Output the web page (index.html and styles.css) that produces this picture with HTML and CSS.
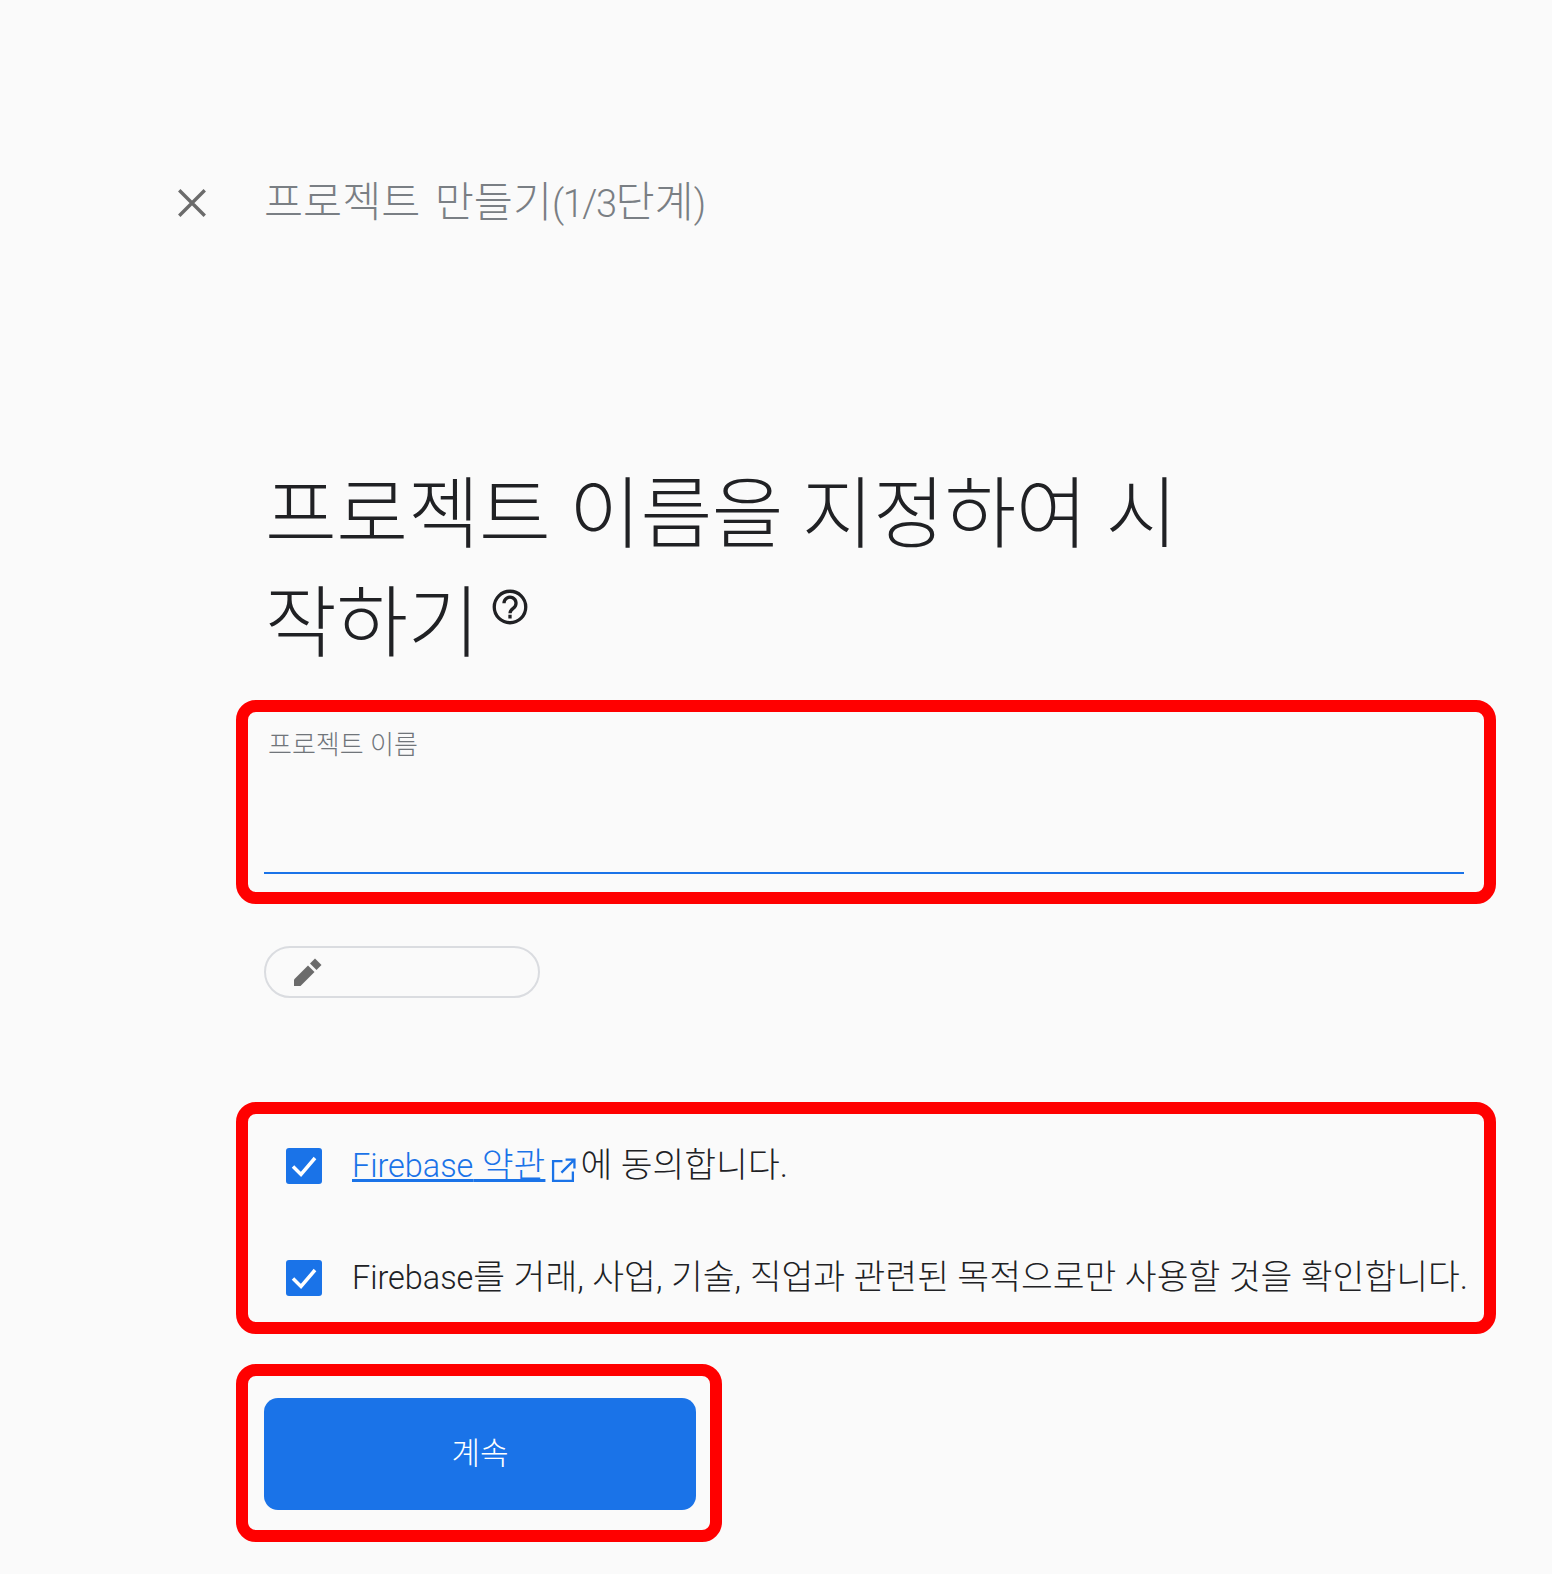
FILE: index.html
```html
<!DOCTYPE html>
<html lang="ko">
    <head>
        <meta charset="UTF-8">
        <title>프로젝트 만들기</title>
        <link rel="stylesheet" href="styles.css">
    </head>
    <body>
        <div class="topBar">
            <svg class="closeIcon" viewBox="0 0 24 24"><path d="M3 3L21 21M21 3L3 21"/></svg>
            <span class="stepTitle">프로젝트 만들기<span class="stepNum">(1/3</span>단계<span class="stepNum">)</span></span>
        </div>

        <h1 class="mainTitle">프로젝트 이름을 지정하여 시<br>작하기<svg class="helpIcon" viewBox="0 0 24 24"><circle cx="12" cy="12" r="10.5"/><path d="M8 9.5a4 4 0 1 1 6.3 3.2c-1.4 1-2.3 1.7-2.3 3.5M12 17.2v2.4"/></svg></h1>

        <div class="redBox nameBox">
            <div class="nameLabel">프로젝트 이름</div>
            <div class="nameLine"></div>
        </div>

        <div class="idChip">
            <svg class="pencilIcon" viewBox="0 0 28 28"><path d="M0 21.5L14 7.5l6.5 6.5L6.5 28H0z"/><path d="M16 5.5l5-5 6.5 6.5-5 5z"/></svg>
        </div>

        <div class="redBox termsBox">
            <div class="termRow">
                <span class="checkBox"><svg viewBox="0 0 36 36"><path d="M7 18.5l8 8L29 10"/></svg></span>
                <span class="termText"><a class="termLink"><span class="latin">Firebase</span> 약관</a><svg class="linkIcon" viewBox="0 0 24 24"><path d="M11 3H2v19h19v-9M14 1.5h8.5V10M22 2L10 14"/></svg>에 동의합니다.</span>
            </div>
            <div class="termRow">
                <span class="checkBox"><svg viewBox="0 0 36 36"><path d="M7 18.5l8 8L29 10"/></svg></span>
                <span class="termText"><span class="latin">Firebase</span>를 거래, 사업, 기술, 직업과 관련된 목적으로만 사용할 것을 확인합니다.</span>
            </div>
        </div>

        <div class="redBox buttonBox">
            <button class="btnContinue">계속</button>
        </div>
    </body>
</html>
```

FILE: styles.css
```css
body {
    margin: 0;
    background: #fafafa;
    font-family: Roboto, "Noto Sans CJK KR", sans-serif;
    color: #202124;
    padding: 171px 0 0 236px;
}

.topBar {
    display: flex;
    align-items: center;
    height: 54px;
    margin-left: -62px;
}

.closeIcon {
    width: 34px;
    height: 34px;
    fill: none;
    stroke: #6b6b6b;
    stroke-width: 2.4;
    margin: 10px 55px 0 1px;
}

.stepTitle {
    font-size: 42.5px;
    font-weight: 300;
    word-spacing: 4px;
    color: #7a7f84;
}

.stepNum {
    font-size: 38px;
    letter-spacing: -1.5px;
}

.mainTitle {
    margin: 236px 0 21px 29px;
    font-size: 78px;
    font-weight: 300;
    line-height: 109px;
    letter-spacing: -0.4px;
}

.helpIcon {
    width: 36px;
    height: 36px;
    fill: none;
    stroke: #202124;
    stroke-width: 2.2;
    margin-left: 13px;
    vertical-align: 26px;
}

.redBox {
    box-sizing: border-box;
    width: 1260px;
    border: 12px solid #ff0000;
    border-radius: 20px;
}

.nameBox {
    height: 204px;
    padding: 15px 20px 0 16px;
    display: flex;
    flex-direction: column;
}

.nameLabel {
    padding-left: 4px;
    font-size: 26px;
    font-weight: 300;
    color: #70757a;
    line-height: 36px;
}

.nameLine {
    margin-top: auto;
    margin-bottom: 18px;
    height: 2px;
    background: #1a73e8;
}

.idChip {
    box-sizing: border-box;
    width: 276px;
    height: 52px;
    margin: 42px 0 104px 28px;
    border: 2px solid #dadce0;
    border-radius: 26px;
    padding: 10px 0 0 28px;
}

.pencilIcon {
    width: 28px;
    height: 28px;
    fill: #6b6b6b;
    display: block;
}

.termsBox {
    height: 232px;
    padding: 30px 0 0 38px;
}

.termRow {
    display: flex;
    align-items: center;
    height: 40px;
    margin-bottom: 72px;
    white-space: nowrap;
}

.checkBox {
    width: 36px;
    height: 36px;
    flex: none;
    margin: 4px 30px 0 0;
    background: #1a73e8;
    border-radius: 3px;
}

.checkBox svg {
    display: block;
    fill: none;
    stroke: #ffffff;
    stroke-width: 3.5;
}

.termText {
    font-size: 34.6px;
    font-weight: 300;
    padding-bottom: 4px;
}

.latin {
    font-size: 32.4px;
}

.termLink {
    color: #1a73e8;
    text-decoration: underline;
}

.linkIcon {
    width: 25px;
    height: 25px;
    fill: none;
    stroke: #1a73e8;
    stroke-width: 2.2;
    margin: 0 4px 0 6px;
    vertical-align: -6px;
}

.buttonBox {
    width: 486px;
    height: 178px;
    margin-top: 30px;
    padding: 22px 0 0 16px;
}

.btnContinue {
    display: block;
    width: 432px;
    height: 112px;
    padding: 0 0 8px;
    border: 0;
    border-radius: 14px;
    background: #1a73e8;
    color: #ffffff;
    font-family: Roboto, "Noto Sans CJK KR", sans-serif;
    font-size: 31px;
    font-weight: 300;
}
```
